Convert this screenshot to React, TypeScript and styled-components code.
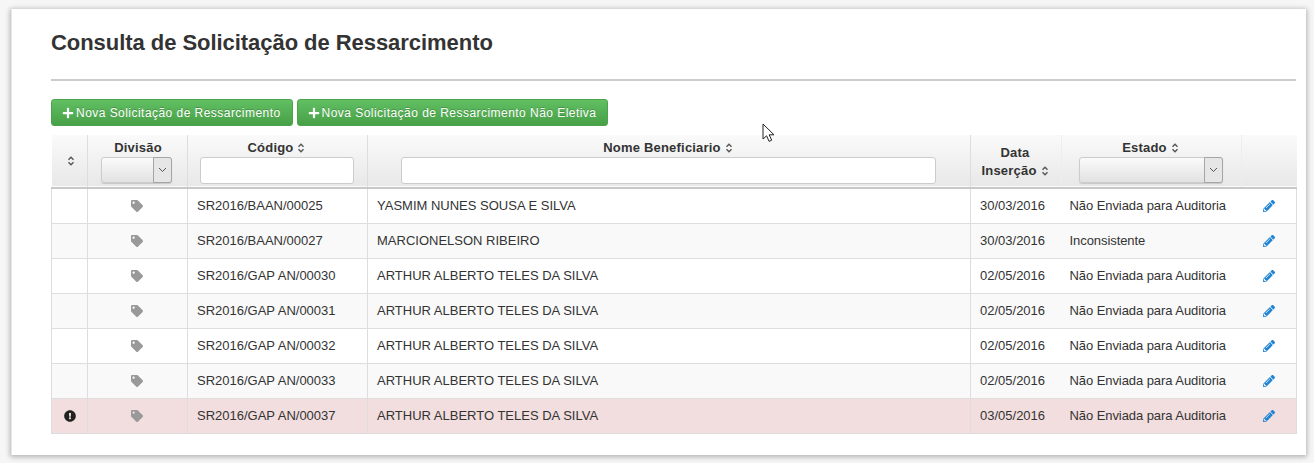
import React, { FC } from "react";
import styled, { createGlobalStyle } from "styled-components";
import {
  FaPlus,
  FaTag,
  FaPencilAlt,
  FaExclamationCircle,
} from "react-icons/fa";

const GlobalStyle = createGlobalStyle`
  html, body {
    margin: 0;
    padding: 0;
    background: #ffffff;
  }
  body {
    font-family: "Liberation Sans", Arial, sans-serif;
    color: #333333;
  }
`;

const Page = styled.div`
  position: relative;
  width: 1314px;
  height: 463px;
  box-sizing: border-box;
  padding: 9px 8px 8px 11px;
  overflow: hidden;
  background: #f6f6f6;
`;

const Card = styled.div`
  width: 1295px;
  height: 446px;
  box-sizing: border-box;
  padding: 0 10px 0 39px;
  background: #ffffff;
  border-left: 1px solid #e8e8e8;
  box-shadow: 0 1px 5px 1px rgba(0, 0, 0, 0.28);
`;

const Title = styled.h1`
  margin: 0;
  height: 70px;
  box-sizing: border-box;
  padding-top: 21px;
  font-size: 22px;
  line-height: 26px;
  font-weight: bold;
  letter-spacing: -0.05px;
  color: #333333;
`;

const Rule = styled.hr`
  margin: 0 0 18px;
  border: 0;
  height: 2px;
  background: #cccccc;
`;

const Toolbar = styled.div`
  display: flex;
  gap: 4px;
  height: 28px;
  margin-bottom: 8px;
`;

const GreenButton = styled.button`
  display: flex;
  align-items: center;
  gap: 2px;
  height: 27px;
  box-sizing: border-box;
  padding: 0 11px 0 10px;
  border: 1px solid #4ba34b;
  border-radius: 3px;
  background: linear-gradient(to bottom, #62bf62 0%, #47a047 100%);
  color: #ffffff;
  font-family: "Liberation Sans", Arial, sans-serif;
  font-size: 12px;
  letter-spacing: 0.46px;
  white-space: nowrap;
  text-shadow: 0 -1px 0 rgba(0, 0, 0, 0.2);
  svg {
    font-size: 12px;
  }
`;

const Table = styled.table`
  width: 1245px;
  table-layout: fixed;
  border-collapse: collapse;
  font-size: 13px;
  color: #333333;
`;

const HeadRow = styled.tr`
  height: 52px;
  background: linear-gradient(to bottom, #fafafa 0%, #e8e8e8 100%);
  border-bottom: 2px solid #c8c8c8;
`;

const HeadCell = styled.th<{ $divider?: boolean }>`
  padding: 4px 2px 3px 0;
  text-align: center;
  vertical-align: top;
  font-size: 13px;
  line-height: 18px;
  font-weight: bold;
  letter-spacing: 0.2px;
  color: #333333;
  border-left: 1px solid ${(p) => (p.$divider ? "#dddddd" : "#eeeeee")};
  &:first-child {
    border-left: 0;
    vertical-align: middle;
    padding: 0 0 0 4px;
  }
`;

const HeadLabel = styled.div`
  height: 18px;
  display: flex;
  justify-content: center;
  align-items: center;
  gap: 4px;
`;

const DivisionLabel = styled(HeadLabel)`
  padding-left: 3px;
`;

const TwoLineLabel = styled.div`
  padding-top: 5px;
  line-height: 18px;
`;

const FilterInput = styled.input<{ $width: number }>`
  display: block;
  box-sizing: border-box;
  width: ${(p) => p.$width}px;
  height: 27px;
  margin: 0 auto;
  border: 1px solid #cccccc;
  border-radius: 3px;
  background: #ffffff;
`;

const FilterSelect = styled.div<{ $width: number }>`
  display: flex;
  justify-content: flex-end;
  box-sizing: border-box;
  width: ${(p) => p.$width}px;
  height: 26px;
  margin: 0 auto;
  border: 1px solid #cccccc;
  border-radius: 3px;
  background: linear-gradient(to bottom, #fafafa 0%, #e2e2e2 100%);
  box-shadow: 0 1px 1px rgba(0, 0, 0, 0.15);
`;

const SelectArrow = styled.div`
  display: flex;
  align-items: center;
  justify-content: center;
  width: 17px;
  margin: -1px;
  border: 1px solid #a5a5a5;
  border-radius: 0 3px 3px 0;
  background: #e6e6e6;
`;

const Row = styled.tr<{ $striped?: boolean; $danger?: boolean }>`
  height: 35px;
  background: ${(p) =>
    p.$danger ? "#f2dede" : p.$striped ? "#f9f9f9" : "#ffffff"};
`;

const Cell = styled.td<{ $noLeft?: boolean; $noRight?: boolean }>`
  padding: 0 9px;
  border: 1px solid #dddddd;
  ${(p) => p.$noLeft && "border-left: 0;"}
  ${(p) => p.$noRight && "border-right: 0;"}
  font-size: 13px;
  white-space: nowrap;
`;

const IconCell = styled(Cell)`
  padding: 0 10px 0 8px;
  svg {
    display: block;
    margin: 0 auto;
  }
`;

const MarkCell = styled(Cell)`
  padding: 0;
  svg {
    display: block;
    margin: 0 auto;
  }
`;

const StateCell = styled(Cell)`
  padding-left: 8px;
  letter-spacing: -0.07px;
`;

const TagIcon = styled(FaTag)`
  color: #999999;
  font-size: 12px;
`;

const EditIcon = styled(FaPencilAlt)`
  color: #1f84d6;
  font-size: 12px;
`;

const AlertIcon = styled(FaExclamationCircle)`
  color: #222222;
  font-size: 12px;
`;

const Cursor = styled.svg`
  position: absolute;
  left: 762px;
  top: 123px;
`;

const SortIcon: FC = () => (
  <svg width="8" height="10" viewBox="0 0 8 10" fill="none" stroke="#555555" strokeWidth="1.4">
    <path d="M1.5 3.8L4 1.3l2.5 2.5M1.5 6.2L4 8.7l2.5-2.5" />
  </svg>
);

const ArrowIcon: FC = () => (
  <svg width="9" height="6" viewBox="0 0 9 6" fill="none" stroke="#555555" strokeWidth="1">
    <path d="M1 1l3.5 3.5L8 1" />
  </svg>
);

interface Item {
  code: string;
  name: string;
  date: string;
  state: string;
}

const items: Item[] = [
  { code: "SR2016/BAAN/00025", name: "YASMIM NUNES SOUSA E SILVA", date: "30/03/2016", state: "Não Enviada para Auditoria" },
  { code: "SR2016/BAAN/00027", name: "MARCIONELSON RIBEIRO", date: "30/03/2016", state: "Inconsistente" },
  { code: "SR2016/GAP AN/00030", name: "ARTHUR ALBERTO TELES DA SILVA", date: "02/05/2016", state: "Não Enviada para Auditoria" },
  { code: "SR2016/GAP AN/00031", name: "ARTHUR ALBERTO TELES DA SILVA", date: "02/05/2016", state: "Não Enviada para Auditoria" },
  { code: "SR2016/GAP AN/00032", name: "ARTHUR ALBERTO TELES DA SILVA", date: "02/05/2016", state: "Não Enviada para Auditoria" },
  { code: "SR2016/GAP AN/00033", name: "ARTHUR ALBERTO TELES DA SILVA", date: "02/05/2016", state: "Não Enviada para Auditoria" },
  { code: "SR2016/GAP AN/00037", name: "ARTHUR ALBERTO TELES DA SILVA", date: "03/05/2016", state: "Não Enviada para Auditoria" },
];

const App: FC = () => {
  return (
    <Page>
      <GlobalStyle />
      <Card>
        <Title>Consulta de Solicitação de Ressarcimento</Title>
        <Rule />
        <Toolbar>
          <GreenButton>
            <FaPlus />
            Nova Solicitação de Ressarcimento
          </GreenButton>
          <GreenButton>
            <FaPlus />
            Nova Solicitação de Ressarcimento Não Eletiva
          </GreenButton>
        </Toolbar>
        <Table>
          <colgroup>
            <col style={{ width: 36 }} />
            <col style={{ width: 100 }} />
            <col style={{ width: 180 }} />
            <col style={{ width: 603 }} />
            <col style={{ width: 91 }} />
            <col style={{ width: 180 }} />
            <col style={{ width: 55 }} />
          </colgroup>
          <thead>
            <HeadRow>
              <HeadCell>
                <HeadLabel>
                  <SortIcon />
                </HeadLabel>
              </HeadCell>
              <HeadCell $divider>
                <DivisionLabel>Divisão</DivisionLabel>
                <FilterSelect $width={71}>
                  <SelectArrow>
                    <ArrowIcon />
                  </SelectArrow>
                </FilterSelect>
              </HeadCell>
              <HeadCell $divider>
                <HeadLabel>
                  Código <SortIcon />
                </HeadLabel>
                <FilterInput $width={154} />
              </HeadCell>
              <HeadCell $divider>
                <HeadLabel>
                  Nome Beneficiario <SortIcon />
                </HeadLabel>
                <FilterInput $width={535} />
              </HeadCell>
              <HeadCell $divider>
                <TwoLineLabel>
                  Data
                  <HeadLabel>
                    Inserção <SortIcon />
                  </HeadLabel>
                </TwoLineLabel>
              </HeadCell>
              <HeadCell>
                <HeadLabel>
                  Estado <SortIcon />
                </HeadLabel>
                <FilterSelect $width={144}>
                  <SelectArrow>
                    <ArrowIcon />
                  </SelectArrow>
                </FilterSelect>
              </HeadCell>
              <HeadCell />
            </HeadRow>
          </thead>
          <tbody>
            {items.map((item, i) => (
              <Row key={item.code} $striped={i % 2 === 1} $danger={i === 6}>
                <MarkCell>{i === 6 && <AlertIcon />}</MarkCell>
                <IconCell>
                  <TagIcon />
                </IconCell>
                <Cell>{item.code}</Cell>
                <Cell>{item.name}</Cell>
                <Cell $noRight>{item.date}</Cell>
                <StateCell $noLeft $noRight>
                  {item.state}
                </StateCell>
                <MarkCell $noLeft>
                  <EditIcon />
                </MarkCell>
              </Row>
            ))}
          </tbody>
        </Table>
      </Card>
      <Cursor width="14" height="20" viewBox="0 0 14 20">
        <path d="M1 1v15l3.6-3.2 2.5 5.6 2.6-1.2-2.5-5.4h4.8z" fill="#ffffff" stroke="#222222" strokeWidth="1" />
      </Cursor>
    </Page>
  );
};

export default App;
